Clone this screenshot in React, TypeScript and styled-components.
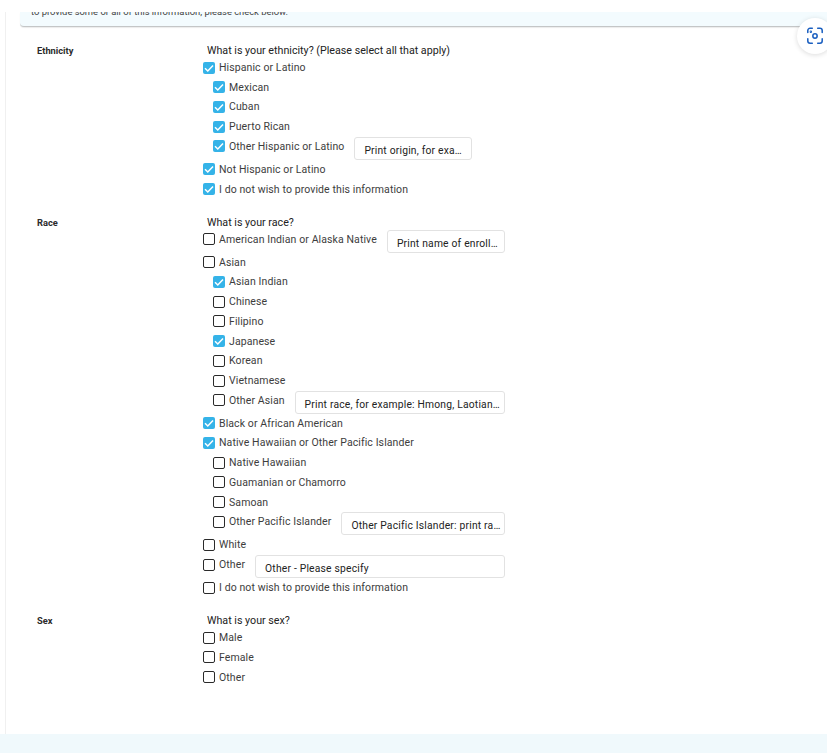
import React from "react";
import styled, { createGlobalStyle } from "styled-components";

const GlobalStyle = createGlobalStyle`
  html, body { margin: 0; padding: 0; background: #fff; }
  * { box-sizing: border-box; }
  body { font-family: Roboto, "Liberation Sans", sans-serif; }
`;

type Opt = {
  label: string;
  checked?: boolean;
  sub?: boolean;
  placeholder?: string;
  inputWidth?: number;
};

const ethnicity: Opt[] = [
  { label: "Hispanic or Latino", checked: true },
  { label: "Mexican", checked: true, sub: true },
  { label: "Cuban", checked: true, sub: true },
  { label: "Puerto Rican", checked: true, sub: true },
  { label: "Other Hispanic or Latino", checked: true, sub: true, placeholder: "Print origin, for exa…", inputWidth: 118 },
  { label: "Not Hispanic or Latino", checked: true },
  { label: "I do not wish to provide this information", checked: true },
];

const race: Opt[] = [
  { label: "American Indian or Alaska Native", placeholder: "Print name of enroll…" },
  { label: "Asian" },
  { label: "Asian Indian", checked: true, sub: true },
  { label: "Chinese", sub: true },
  { label: "Filipino", sub: true },
  { label: "Japanese", checked: true, sub: true },
  { label: "Korean", sub: true },
  { label: "Vietnamese", sub: true },
  { label: "Other Asian", sub: true, placeholder: "Print race, for example: Hmong, Laotian…" },
  { label: "Black or African American", checked: true },
  { label: "Native Hawaiian or Other Pacific Islander", checked: true },
  { label: "Native Hawaiian", sub: true },
  { label: "Guamanian or Chamorro", sub: true },
  { label: "Samoan", sub: true },
  { label: "Other Pacific Islander", sub: true, placeholder: "Other Pacific Islander: print ra…" },
  { label: "White" },
  { label: "Other", placeholder: "Other - Please specify" },
  { label: "I do not wish to provide this information" },
];

const sex: Opt[] = [{ label: "Male" }, { label: "Female" }, { label: "Other" }];

const Check = ({ on }: { on?: boolean }) => (
  <Box $on={on}>
    {on && (
      <svg width="12" height="12" viewBox="0 0 12 12" fill="none">
        <path d="M2 6.2 L4.8 9 L10 3.4" stroke="#fff" strokeWidth="1.5" />
      </svg>
    )}
  </Box>
);

const Options = ({ items }: { items: Opt[] }) => (
  <>
    {items.map((o, i) => (
      <Row key={i} $sub={o.sub} $hasInput={!!o.placeholder}>
        <Check on={o.checked} />
        <Label>{o.label}</Label>
        {o.placeholder && <TextBox $w={o.inputWidth}>{o.placeholder}</TextBox>}
      </Row>
    ))}
  </>
);

export default function App() {
  return (
    <>
      <GlobalStyle />
      <Page>
        <TopGap />
        <Content>
          <Banner>
            <BannerText>to provide some or all of this information, please check below.</BannerText>
          </Banner>
          <LensButton>
            <svg width="18" height="18" viewBox="0 0 20 20" fill="none" stroke="#1a5fc0" strokeWidth="1.7" strokeLinecap="round">
              <path d="M2 6 V4 a2.5 2.5 0 0 1 2.5 -2.5 H7" />
              <path d="M13 1.5 H15.5 a2.5 2.5 0 0 1 2.5 2.5 V6" />
              <path d="M18 13 V15.5 a2.5 2.5 0 0 1 -2.5 2.5 H13" />
              <path d="M7 18 H4.5 a2.5 2.5 0 0 1 -2.5 -2.5 V13" />
              <circle cx="10" cy="10" r="2.4" />
              <circle cx="5.4" cy="5.2" r="0.5" />
            </svg>
          </LensButton>
          <Section>
            <SectionName>Ethnicity</SectionName>
            <Fields>
              <Question>What is your ethnicity? (Please select all that apply)</Question>
              <Options items={ethnicity} />
            </Fields>
          </Section>
          <Section>
            <SectionName>Race</SectionName>
            <Fields>
              <Question>What is your race?</Question>
              <Options items={race} />
            </Fields>
          </Section>
          <Section>
            <SectionName>Sex</SectionName>
            <Fields>
              <Question>What is your sex?</Question>
              <Options items={sex} />
            </Fields>
          </Section>
        </Content>
        <Footer />
      </Page>
    </>
  );
}

const Page = styled.div`
  width: 827px;
  height: 753px;
  overflow: hidden;
  display: flex;
  flex-direction: column;
  background: #fff;
`;

const TopGap = styled.div`
  height: 12px;
  flex: none;
`;

const Content = styled.main`
  position: relative;
  flex: 1;
  margin-left: 5px;
  padding-left: 14px;
  border-left: 1px solid #f0f0f0;
`;

const Banner = styled.div`
  height: 15px;
  margin-bottom: 16px;
  background: #f3fbfe;
  border-bottom: 1px solid #c4c6c7;
  border-bottom-left-radius: 4px;
  box-shadow: 0 1px 1px rgba(0, 0, 0, 0.08);
  padding-left: 11px;
  overflow: hidden;
`;

const BannerText = styled.div`
  margin-top: -5px;
  font-size: 9.4px;
  line-height: 10px;
  color: #444;
  white-space: nowrap;
`;

const LensButton = styled.div`
  position: absolute;
  top: 6px;
  right: -6px;
  width: 36px;
  height: 36px;
  border-radius: 50%;
  background: #fff;
  box-shadow: 0 1px 5px rgba(0, 0, 0, 0.14);
  display: flex;
  align-items: center;
  justify-content: center;
`;

const Section = styled.section`
  display: flex;
  align-items: flex-start;
  margin-bottom: 13.2px;
  padding-left: 17px;
`;

const SectionName = styled.div`
  width: 166px;
  flex: none;
  font-size: 9.3px;
  font-weight: 700;
  color: #2b2b2b;
  line-height: 14px;
  padding-top: 1px;
`;

const Fields = styled.div`
  width: 302px;
  display: flex;
  flex-direction: column;
`;

const Question = styled.div`
  font-size: 10.7px;
  color: #222;
  line-height: 14px;
  padding: 1px 0 0 4px;
  margin-bottom: 2px;
`;

const Row = styled.div<{ $sub?: boolean; $hasInput?: boolean }>`
  display: flex;
  align-items: flex-start;
  height: ${(p) => (p.$hasInput ? "23px" : "19.74px")};
  padding-left: ${(p) => (p.$sub ? "10px" : "0")};
`;

const Box = styled.span<{ $on?: boolean }>`
  flex: none;
  width: 12px;
  height: 12px;
  margin-top: 1.5px;
  border-radius: 2px;
  border: ${(p) => (p.$on ? "none" : "1.6px solid #2a2a2a")};
  background: ${(p) => (p.$on ? "#35b3e8" : "#fff")};
  display: flex;
  align-items: center;
  justify-content: center;
`;

const Label = styled.span`
  margin-left: 4px;
  font-size: 10.5px;
  line-height: 16px;
  letter-spacing: 0.1px;
  color: #3d3d3d;
  white-space: nowrap;
`;

const TextBox = styled.div<{ $w?: number }>`
  margin-left: 10px;
  margin-top: -2px;
  flex: ${(p) => (p.$w ? `none` : `1`)};
  width: ${(p) => (p.$w ? `${p.$w}px` : "auto")};
  min-width: 0;
  height: 23px;
  border: 1px solid #e2e2e2;
  border-radius: 3px;
  background: #fff;
  font-size: 10.3px;
  line-height: 25px;
  letter-spacing: 0.2px;
  padding-left: 9px;
  color: #222;
  white-space: nowrap;
  overflow: hidden;
`;

const Footer = styled.div`
  height: 19px;
  flex: none;
  background: #f0f9fc;
`;
